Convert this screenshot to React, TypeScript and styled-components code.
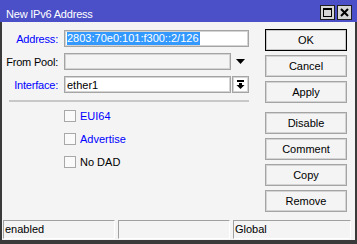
import * as React from 'react'
import styled, { createGlobalStyle } from 'styled-components'

const GlobalStyle = createGlobalStyle`
  html, body {
    margin: 0;
    padding: 0;
  }
  body {
    width: 357px;
    height: 244px;
    overflow: hidden;
    font-family: "Liberation Sans", Arial, sans-serif;
    font-size: 11px;
    color: #000;
  }
`

const Window = styled.div`
  width: 357px;
  height: 244px;
  box-sizing: border-box;
  display: flex;
  flex-direction: column;
  background: #f4f4f4;
`

const TitleBar = styled.div`
  height: 22px;
  flex: none;
  display: flex;
  align-items: flex-start;
  padding: 0 5px 0 6px;
  background: #4b4fc8;
  color: #fff;
`

const TitleText = styled.div`
  margin-top: 8px;
  line-height: 13px;
  letter-spacing: -0.2px;
`

const TitleButtons = styled.div`
  margin-left: auto;
  margin-top: 5px;
  display: flex;
  gap: 2px;
`

const TitleButton = styled.div`
  width: 15px;
  height: 15px;
  box-sizing: border-box;
  border: 1px solid #202020;
  background: #d6d6d6;
  display: flex;
  align-items: center;
  justify-content: center;
`

const Body = styled.div`
  flex: 1;
  display: flex;
  flex-direction: column;
  border-style: solid;
  border-color: #3a3a3a;
  border-width: 0 2px 4px 2px;
`

const Main = styled.div`
  flex: 1;
  display: flex;
  padding: 7px 8px 0 7px;
`

const Form = styled.div`
  width: 240px;
  display: flex;
  flex-direction: column;
  padding-top: 1px;
`

const Row = styled.div`
  height: 17px;
  display: flex;
  align-items: center;
  margin-bottom: 6px;
`

const Label = styled.div<{ $link?: boolean }>`
  width: 53px;
  margin-left: -4px;
  margin-right: 6px;
  text-align: right;
  white-space: nowrap;
  letter-spacing: -0.2px;
  color: ${p => (p.$link ? '#0000ff' : '#000')};
`

const Field = styled.div<{ $width: number; $disabled?: boolean }>`
  width: ${p => p.$width}px;
  height: 17px;
  box-sizing: border-box;
  border: 1px solid #a4a4a4;
  box-shadow: inset 0 0 0 1px #d4d4d4;
  background: ${p => (p.$disabled ? '#f4f4f4' : '#fff')};
  display: flex;
  align-items: center;
  padding-left: 2px;
  white-space: nowrap;
  overflow: hidden;
`

const Selected = styled.span`
  background: #3399ff;
  color: #fff;
  line-height: 13px;
  padding: 0 1px 0 0;
`

const ArrowSlot = styled.div`
  width: 18px;
  height: 17px;
  display: flex;
  align-items: center;
  justify-content: center;
`

const DropButton = styled.div`
  width: 17px;
  height: 17px;
  margin-left: 1px;
  box-sizing: border-box;
  border: 1px solid #a4a4a4;
  box-shadow: inset 0 0 0 1px #d4d4d4;
  background: #fff;
  display: flex;
  align-items: center;
  justify-content: center;
`

const Separator = styled.div`
  height: 2px;
  margin-top: 1px;
  background: #c8c8c8;
`

const CheckRow = styled.div<{ $first?: boolean }>`
  height: 12px;
  display: flex;
  align-items: center;
  margin: ${p => (p.$first ? 8 : 11)}px 0 0 55px;
`

const Box = styled.div`
  width: 12px;
  height: 12px;
  box-sizing: border-box;
  border: 1px solid #a8a8a8;
  background: #fafafa;
  margin-right: 4px;
`

const CheckLabel = styled.span<{ $link?: boolean }>`
  color: ${p => (p.$link ? '#0000ff' : '#000')};
`

const Buttons = styled.div`
  width: 82px;
  margin-left: 16px;
  display: flex;
  flex-direction: column;
`

const Button = styled.div<{ $primary?: boolean; $gapTop?: boolean }>`
  height: 22px;
  box-sizing: border-box;
  margin-bottom: 4px;
  margin-top: ${p => (p.$gapTop ? 5 : 0)}px;
  border: 1px solid ${p => (p.$primary ? '#000' : '#a4a4a4')};
  box-shadow: inset 0 0 0 1px ${p => (p.$primary ? '#c8c8c8' : '#d4d4d4')};
  background: #f4f4f4;
  display: flex;
  align-items: center;
  justify-content: center;
`

const StatusBar = styled.div`
  display: grid;
  grid-template-columns: 112px 112px 118px;
  column-gap: 3px;
  padding: 0 0 1px 1px;
`

const Cell = styled.div`
  height: 19px;
  box-sizing: border-box;
  border-top: 1px solid #a0a0a0;
  border-left: 1px solid #a0a0a0;
  border-bottom: 1px solid #fff;
  border-right: 1px solid #fff;
  padding-left: 1px;
  line-height: 17px;
`

const DownTriangle = () => (
  <svg width="9" height="5" viewBox="0 0 9 5">
    <polygon points="0,0 9,0 4.5,5" fill="#000" />
  </svg>
)

const DownToBar = () => (
  <svg width="9" height="9" viewBox="0 0 9 9">
    <rect x="1" y="0" width="7" height="2" fill="#000" />
    <rect x="3" y="3" width="3" height="2" fill="#000" />
    <polygon points="0.5,5 8.5,5 4.5,9" fill="#000" />
  </svg>
)

const MaxIcon = () => (
  <svg width="9" height="9" viewBox="0 0 9 9">
    <rect x="0.5" y="0.5" width="8" height="8" fill="none" stroke="#000" />
    <rect x="0" y="0" width="9" height="2" fill="#000" />
  </svg>
)

const CloseIcon = () => (
  <svg width="9" height="9" viewBox="0 0 9 9">
    <path d="M1 1 L8 8 M8 1 L1 8" stroke="#000" strokeWidth="2" />
  </svg>
)

export default function App() {
  return (
    <Window>
      <GlobalStyle />
      <TitleBar>
        <TitleText>New IPv6 Address</TitleText>
        <TitleButtons>
          <TitleButton><MaxIcon /></TitleButton>
          <TitleButton><CloseIcon /></TitleButton>
        </TitleButtons>
      </TitleBar>
      <Body>
        <Main>
          <Form>
            <Row>
              <Label $link>Address:</Label>
              <Field $width={185}>
                <Selected>2803:70e0:101:f300::2/126</Selected>
              </Field>
            </Row>
            <Row>
              <Label>From Pool:</Label>
              <Field $width={167} $disabled />
              <ArrowSlot><DownTriangle /></ArrowSlot>
            </Row>
            <Row>
              <Label $link>Interface:</Label>
              <Field $width={167}>ether1</Field>
              <DropButton><DownToBar /></DropButton>
            </Row>
            <Separator />
            <CheckRow $first>
              <Box />
              <CheckLabel $link>EUI64</CheckLabel>
            </CheckRow>
            <CheckRow>
              <Box />
              <CheckLabel $link>Advertise</CheckLabel>
            </CheckRow>
            <CheckRow>
              <Box />
              <CheckLabel>No DAD</CheckLabel>
            </CheckRow>
          </Form>
          <Buttons>
            <Button $primary>OK</Button>
            <Button>Cancel</Button>
            <Button>Apply</Button>
            <Button $gapTop>Disable</Button>
            <Button>Comment</Button>
            <Button>Copy</Button>
            <Button>Remove</Button>
          </Buttons>
        </Main>
        <StatusBar>
          <Cell>enabled</Cell>
          <Cell />
          <Cell>Global</Cell>
        </StatusBar>
      </Body>
    </Window>
  )
}
